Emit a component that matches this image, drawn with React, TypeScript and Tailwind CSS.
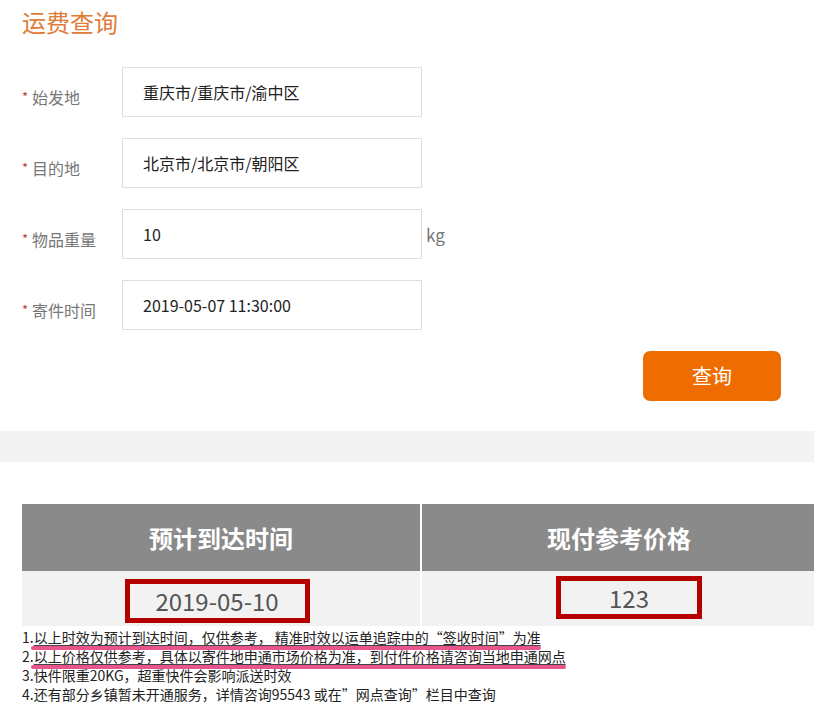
import React from 'react';

const fields = [
  { label: '始发地', value: '重庆市/重庆市/渝中区' },
  { label: '目的地', value: '北京市/北京市/朝阳区' },
  { label: '物品重量', value: '10', unit: 'kg' },
  { label: '寄件时间', value: '2019-05-07 11:30:00' },
];

const notes = [
  { no: '1.', text: '以上时效为预计到达时间，仅供参考， 精准时效以运单追踪中的“签收时间”为准', mark: true },
  { no: '2.', text: '以上价格仅供参考，具体以寄件地申通市场价格为准，到付件价格请咨询当地申通网点', mark: true },
  { no: '3.', text: '快件限重20KG，超重快件会影响派送时效', mark: false },
  { no: '4.', text: '还有部分乡镇暂未开通服务，详情咨询95543 或在”网点查询”栏目中查询', mark: false },
];

export default function App() {
  return (
    <div
      className="h-[709px] w-[814px] overflow-hidden bg-white"
      style={{ fontFamily: '"Noto Sans CJK SC", "Noto Sans", sans-serif' }}
    >
      {/* Title */}
      <h1 className="pl-[22px] pt-[7px] text-[24px] leading-[30px] font-normal text-[#e07b39]">运费查询</h1>

      {/* Form */}
      <div className="mt-[30px] space-y-[21px]">
        {fields.map((f) => (
          <div key={f.label} className="flex h-[50px] items-center">
            <div className="flex w-[122px] items-center pl-[22px] pt-[9px] text-[16px] text-[#777]">
              <span className="mr-[4px] text-[13px] text-[#b5474a]">*</span>
              <span>{f.label}</span>
            </div>
            <div className="flex h-[50px] w-[300px] items-center border border-[#dedede] pl-[20px] text-[16px] text-[#222]">
              {f.value}
            </div>
            {f.unit && <span className="ml-[4px] pt-[2px] text-[17px] text-[#777]">{f.unit}</span>}
          </div>
        ))}

        <div className="flex justify-end pr-[33px]">
          <button className="h-[50px] w-[138px] rounded-[7px] bg-[#ef6c00] text-[20px] text-white">查询</button>
        </div>
      </div>

      {/* Divider band */}
      <div className="mt-[30px] h-[31px] bg-[#f4f3f4]" />

      {/* Result table */}
      <div className="ml-[22px] mt-[42px]">
        <div className="grid grid-cols-[398px_1fr] gap-x-[2px] bg-white">
          <div className="flex h-[67px] items-center justify-center bg-[#8a8a8a] text-[24px] font-bold text-white">
            预计到达时间
          </div>
          <div className="flex h-[67px] items-center justify-center bg-[#8a8a8a] pl-[2px] text-[24px] font-bold text-white">
            现付参考价格
          </div>
          <div className="flex h-[55px] justify-center bg-[#f2f2f2] pt-[8px]">
            <div className="-ml-[8px] flex h-[44px] w-[185px] items-center justify-center border-[5px] border-[#b50000] text-[24px] text-[#555]">
              2019-05-10
            </div>
          </div>
          <div className="flex h-[55px] justify-center bg-[#f2f2f2] pt-[5px]">
            <div className="ml-[22px] flex h-[43px] w-[146px] items-center justify-center border-[5px] border-[#b50000] text-[24px] text-[#555]">
              123
            </div>
          </div>
        </div>
      </div>

      {/* Notes */}
      <div className="mt-[2px] pl-[22px] text-[14px] leading-[19px] text-[#222]">
        {notes.map((n) => (
          <p key={n.no} className="whitespace-nowrap">
            {n.no}
            {n.mark ? (
              <span className="relative underline decoration-[#444] underline-offset-[2px]">
                {n.text}
                <span className="absolute -bottom-[3px] -left-[3px] right-0 h-[4px] rounded-full bg-[#e8548c]" />
              </span>
            ) : (
              n.text
            )}
          </p>
        ))}
      </div>
    </div>
  );
}
